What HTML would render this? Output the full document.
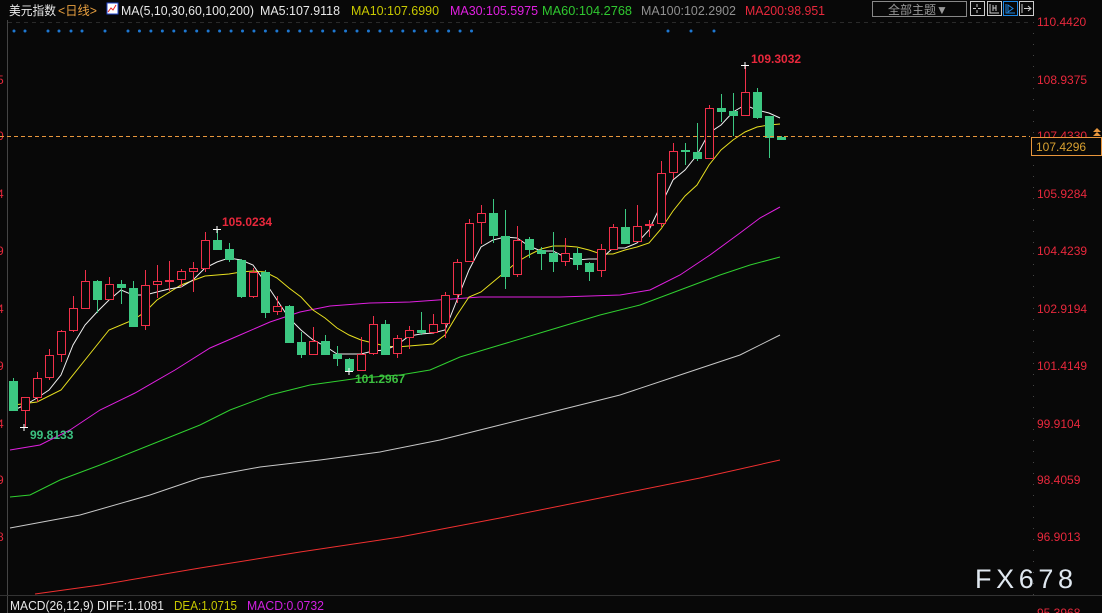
<!DOCTYPE html>
<html><head><meta charset="utf-8"><style>
html,body{margin:0;padding:0;background:#080808;width:1102px;height:613px;overflow:hidden}
svg{display:block}
text{font-family:"Liberation Sans","Noto Sans CJK SC",sans-serif}
</style></head><body>
<svg id="s" width="1102" height="613" xmlns="http://www.w3.org/2000/svg">
<rect width="1102" height="613" fill="#080808"/>
<line x1="7.5" y1="20" x2="7.5" y2="613" stroke="#444" />
<line x1="8" y1="22.5" x2="1030" y2="22.5" stroke="#2a2a2a" stroke-dasharray="4,4"/>
<line x1="0" y1="595.5" x2="1102" y2="595.5" stroke="#333"/>
<line x1="1033.5" y1="22" x2="1033.5" y2="595" stroke="#444" stroke-dasharray="1,10"/>
<g font-size="12" fill="#e8283c">
<text x="-3" y="84">5</text><text x="-3" y="140">0</text><text x="-3" y="198">4</text><text x="-3" y="255">9</text><text x="-3" y="313">4</text><text x="-3" y="370">9</text><text x="-3" y="428">4</text><text x="-3" y="484">9</text><text x="-3" y="541">8</text>
</g>
<g font-size="12" fill="#e8283c">
<text x="1037" y="26">110.4420</text><text x="1037" y="84">108.9375</text><text x="1037" y="140">107.4330</text><text x="1037" y="198">105.9284</text><text x="1037" y="255">104.4239</text><text x="1037" y="313">102.9194</text><text x="1037" y="370">101.4149</text><text x="1037" y="428">99.9104</text><text x="1037" y="484">98.4059</text><text x="1037" y="541">96.9013</text><text x="1037" y="617">95.3968</text>
</g>
<g id="ma" fill="none" stroke-width="1"></g>
<g id="cd"></g>
<line x1="0" y1="136.5" x2="1030" y2="136.5" stroke="#e8963c" stroke-dasharray="4,3"/>
<rect x="1031.5" y="137.5" width="70" height="18" fill="#080808" stroke="#e8963c"/>
<text x="1036" y="151" font-size="12" fill="#d8a030">107.4296</text>
<path d="M1093 132 l4 -4 l4 4 z M1093 136 l4 -4 l4 4 z" fill="#e8963c"/>
<g font-size="12" font-weight="bold">
<text x="222" y="226" fill="#e8283c">105.0234</text>
<text x="751" y="63" fill="#e8283c">109.3032</text>
<text x="30" y="439" fill="#3cc080">99.8133</text>
<text x="355" y="383" fill="#3cc040">101.2967</text>
</g>
<g stroke="#fff"><path d="M213 229.5h8M217 226v7M741 65.5h8M745 62v7M20 427.5h8M24 424v7M345 371.5h8M349 368v7"/></g>
<g id="dots" fill="#1e78d2"></g>
<g font-size="12.5">
<text x="9" y="15" fill="#e8e8e8" textLength="47" lengthAdjust="spacingAndGlyphs">美元指数</text><text x="58" y="15" fill="#e8a040" textLength="39" lengthAdjust="spacingAndGlyphs">&lt;日线&gt;</text>
<rect x="107" y="3" width="11" height="11" fill="#fff" stroke="#24c" /><path d="M108 12l3-4 2 2 3-5" stroke="#e22" fill="none"/>
<text x="121" y="15" fill="#e8e8e8" textLength="133" lengthAdjust="spacingAndGlyphs">MA(5,10,30,60,100,200)</text>
<text x="260" y="15" fill="#e8e8e8" textLength="80" lengthAdjust="spacingAndGlyphs">MA5:107.9118</text>
<text x="351" y="15" fill="#c8c800" textLength="88" lengthAdjust="spacingAndGlyphs">MA10:107.6990</text>
<text x="450" y="15" fill="#e020e0" textLength="88" lengthAdjust="spacingAndGlyphs">MA30:105.5975</text>
<text x="542" y="15" fill="#30c830" textLength="90" lengthAdjust="spacingAndGlyphs">MA60:104.2768</text>
<text x="641" y="15" fill="#909090" textLength="95" lengthAdjust="spacingAndGlyphs">MA100:102.2902</text>
<text x="745" y="15" fill="#e8283c" textLength="80" lengthAdjust="spacingAndGlyphs">MA200:98.951</text>
<text x="10" y="610" fill="#e8e8e8" textLength="154" lengthAdjust="spacingAndGlyphs">MACD(26,12,9) DIFF:1.1081</text>
<text x="174" y="610" fill="#c8c800" textLength="63" lengthAdjust="spacingAndGlyphs">DEA:1.0715</text>
<text x="247" y="610" fill="#d020e0" textLength="77" lengthAdjust="spacingAndGlyphs">MACD:0.0732</text>
</g>
<rect x="872.5" y="1.5" width="94" height="15" fill="none" stroke="#888"/>
<text x="888" y="14" font-size="12" fill="#999">全部主题▼</text>
<g fill="none" stroke="#ccc"><rect x="970.5" y="1.5" width="14" height="14"/><rect x="987.5" y="1.5" width="14" height="14"/><rect x="1003.5" y="1.5" width="14" height="14" stroke="#1e88e5"/><rect x="1019.5" y="1.5" width="14" height="14"/>
<path d="M977 4v3M977 10v3M973 8.5h3M978 8.5h3M990 4v9h9M993 5v6M996 5v6M993 8h3"/><path d="M1006 4v9h9M1008 5l5 3.5-5 3.5z" stroke="#1e88e5"/><path d="M1022 4v9M1024 8.5h7M1028 6l3 2.5-3 2.5"/></g>
<text x="975" y="588" font-size="27" fill="#e0e8f0" textLength="98" lengthAdjust="spacing">FX678</text>
</svg>
<script>
var NS="http://www.w3.org/2000/svg";
function el(p,t,a){var e=document.createElementNS(NS,t);for(var k in a)e.setAttribute(k,a[k]);p.appendChild(e);return e;}
var C=[[13,381,410,378,410,0],[25,397,410,397,427,1],[37,378,397,372,402,1],[49,355,377,349,380,1],[61,331,354,330,362,1],[73,308,330,296,332,1],[85,281,308,270,309,1],[97,281,299,280,313,0],[109,284,299,277,300,1],[121,284,287,280,304,0],[133,288,326,281,327,0],[145,285,325,270,330,1],[157,281,284,265,298,1],[169,280,281,261,291,1],[181,271,279,269,287,1],[193,268,271,262,292,1],[205,240,268,232,272,1],[217,240,249,229,249,0],[229,249,259,243,262,0],[241,260,296,259,298,0],[253,272,296,268,298,1],[265,272,312,270,318,0],[277,306,311,296,315,1],[289,306,342,305,343,0],[301,342,354,332,358,0],[313,341,354,327,355,1],[325,341,354,335,354,0],[337,354,358,346,366,0],[349,359,370,358,371,0],[361,354,370,337,371,1],[373,324,353,316,355,1],[385,324,354,320,355,0],[397,338,353,335,358,1],[409,330,337,326,349,1],[421,330,332,312,335,0],[433,324,332,314,334,1],[445,295,323,292,338,1],[457,262,294,259,303,1],[469,223,261,219,262,1],[481,213,222,205,244,1],[493,213,235,199,243,0],[505,236,276,210,289,0],[517,240,274,226,277,1],[529,239,249,237,258,0],[541,250,253,247,270,0],[553,253,261,232,272,0],[565,253,261,238,266,1],[577,253,264,248,270,0],[589,263,271,262,281,0],[601,249,270,244,277,1],[613,227,249,224,250,1],[625,227,243,209,243,0],[637,226,241,205,242,1],[649,224,225,220,237,1],[661,173,223,161,227,1],[673,151,172,143,179,1],[685,150,151,143,165,0],[697,152,158,123,161,0],[709,108,158,105,159,1],[721,108,111,94,122,0],[733,111,115,93,136,0],[745,92,115,65,116,1],[757,92,117,88,119,0],[769,116,137,116,158,0],[781,137,139,136,139,0]];
var cd=document.getElementById("cd");
C.forEach(function(c){var x=c[0],col=c[5]?"#f0304a":"#3cc882";
el(cd,"line",{x1:x+.5,x2:x+.5,y1:c[3],y2:c[4],stroke:col});
var h=Math.max(1,c[2]-c[1]);
if(c[5])el(cd,"rect",{x:x-3.5,y:c[1]+.5,width:8,height:h,fill:"#080808",stroke:col});
else el(cd,"rect",{x:x-4,y:c[1],width:9,height:h+1,fill:col});});
var ma=document.getElementById("ma");
var L=[["#c8c8c8","10,528 80,515 150,495 200,478 260,467 320,460 380,452 440,440 500,425 560,410 620,395 680,375 740,355 780,335"],
["#f03030","35,594 100,585 200,568 300,552 400,537 500,518 600,498 700,478 780,460"],
["#30d030","10,497 30,495 60,480 100,465 150,445 200,425 230,410 270,395 310,385 360,378 400,375 430,370 460,357 500,345 550,330 600,315 640,305 680,290 720,275 750,265 780,257"],
["#e020e0","10,450 40,445 70,430 100,410 135,393 175,370 210,348 240,335 270,322 300,312 330,306 370,303 410,302 480,297 560,297 620,295 650,290 680,275 710,255 740,233 760,218 780,207"],
["#e8e020","14,405 37,402 61,390 85,360 109,330 133,320 145,312 157,300 181,285 205,276 229,274 241,272 253,271 265,272 277,278 289,288 301,297 313,310 325,318 337,328 349,335 361,340 373,343 385,346 397,347 409,346 421,345 433,344 445,335 457,315 469,297 481,292 493,282 505,272 517,262 529,255 541,249 553,246 565,246 577,247 589,250 601,254 613,254 625,250 637,247 649,243 661,229 673,211 685,196 697,185 709,165 721,150 733,140 745,132 757,127 769,125 780,124"],
["#f0f0f0","14,410 25,405 37,398 49,390 61,375 73,345 85,325 97,312 109,300 121,290 133,295 145,295 157,292 169,289 181,287 193,280 205,268 217,262 229,258 241,260 253,265 265,282 277,300 289,318 301,330 313,340 325,346 337,354 349,354 361,354 373,351 385,350 397,345 409,336 421,334 433,333 445,330 457,300 469,270 481,247 493,240 505,237 517,238 529,246 541,251 553,251 565,257 577,260 589,259 601,259 613,248 625,248 637,243 649,230 661,205 673,180 685,170 697,155 709,133 721,125 733,112 745,105 757,110 769,113 780,118"]];
L.forEach(function(l){el(ma,"polyline",{points:l[1],stroke:l[0]});});
var d=document.getElementById("dots");
[14,25,48,59,71,82,105].concat((function(){var a=[];for(var x=128;x<=472;x+=11.45)a.push(x);return a})()).concat([668,691,714]).forEach(function(x){el(d,"circle",{cx:x,cy:31,r:1.5});});
</script>
</body></html>
